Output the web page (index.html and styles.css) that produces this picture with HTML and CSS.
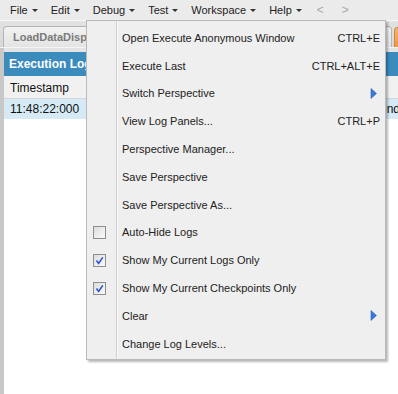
FILE: index.html
```html
<!DOCTYPE html>
<html lang="en">
<head>
  <meta charset="UTF-8">
  <title>Developer Console</title>
  <link rel="stylesheet" href="styles.css">
</head>
<body>
  <div class="menubar">
    <span class="menu-title">File <i class="caret"></i></span>
    <span class="menu-title">Edit <i class="caret"></i></span>
    <span class="menu-title">Debug <i class="caret"></i></span>
    <span class="menu-title">Test <i class="caret"></i></span>
    <span class="menu-title">Workspace <i class="caret"></i></span>
    <span class="menu-title">Help <i class="caret"></i></span>
    <span class="nav">&lt;</span>
    <span class="nav">&gt;</span>
  </div>

  <div class="tabstrip">
    <div class="tab">LoadDataDisplay</div>
    <div class="tab tab-orange"></div>
  </div>

  <div class="workspace">
    <div class="side-strip"></div>
    <div class="panel">
      <div class="panel-header">Execution Log</div>
      <div class="grid-row grid-head">
        <span class="col-time">Timestamp</span>
        <span class="col-rest"></span>
      </div>
      <div class="grid-row grid-selected">
        <span class="col-time">11:48:22:000</span>
        <span class="col-rest">Unde</span>
      </div>
    </div>
  </div>

  <div class="dropdown">
    <div class="item"><span class="gutter"></span><span class="label">Open Execute Anonymous Window</span><span class="key">CTRL+E</span></div>
    <div class="item"><span class="gutter"></span><span class="label">Execute Last</span><span class="key">CTRL+ALT+E</span></div>
    <div class="item"><span class="gutter"></span><span class="label">Switch Perspective</span><span class="key"><svg class="sub-arrow" width="7" height="11" viewBox="0 0 7 11"><path d="M1 0.5 L6.5 5.5 L1 10.5 Z" fill="#3b7bd8" stroke="#2a62b8" stroke-width="0.6"/></svg></span></div>
    <div class="item"><span class="gutter"></span><span class="label">View Log Panels...</span><span class="key">CTRL+P</span></div>
    <div class="item"><span class="gutter"></span><span class="label">Perspective Manager...</span><span class="key"></span></div>
    <div class="item"><span class="gutter"></span><span class="label">Save Perspective</span><span class="key"></span></div>
    <div class="item"><span class="gutter"></span><span class="label">Save Perspective As...</span><span class="key"></span></div>
    <div class="item"><span class="gutter"><span class="check"></span></span><span class="label">Auto-Hide Logs</span><span class="key"></span></div>
    <div class="item"><span class="gutter"><span class="check"><svg width="11" height="11" viewBox="0 0 11 11"><path d="M2.5 5.5 L4.6 8.4 L8.8 2.4" fill="none" stroke="#2a55c8" stroke-width="1.6"/></svg></span></span><span class="label">Show My Current Logs Only</span><span class="key"></span></div>
    <div class="item"><span class="gutter"><span class="check"><svg width="11" height="11" viewBox="0 0 11 11"><path d="M2.5 5.5 L4.6 8.4 L8.8 2.4" fill="none" stroke="#2a55c8" stroke-width="1.6"/></svg></span></span><span class="label">Show My Current Checkpoints Only</span><span class="key"></span></div>
    <div class="item"><span class="gutter"></span><span class="label">Clear</span><span class="key"><svg class="sub-arrow" width="7" height="11" viewBox="0 0 7 11"><path d="M1 0.5 L6.5 5.5 L1 10.5 Z" fill="#3b7bd8" stroke="#2a62b8" stroke-width="0.6"/></svg></span></div>
    <div class="item"><span class="gutter"></span><span class="label">Change Log Levels...</span><span class="key"></span></div>
  </div>
</body>
</html>
```

FILE: styles.css
```css
html, body {
  margin: 0;
  padding: 0;
  height: 100%;
  background-color: #fff;
  font-family: 'Liberation Sans', Arial, sans-serif;
  font-size: 11px;
  color: #222;
  overflow: hidden;
}
.menubar {
  display: flex;
  align-items: center;
  gap: 13px;
  height: 20px;
  padding-left: 10px;
  background-color: #ebebeb;
}
.menu-title {
  display: flex;
  align-items: center;
  gap: 4px;
  color: #222;
}
.caret {
  display: inline-block;
  width: 0;
  height: 0;
  border-left: 3px solid transparent;
  border-right: 3px solid transparent;
  border-top: 3px solid #333;
  margin-top: 1px;
}
.nav {
  color: #a8a8a8;
  font-size: 12px;
  margin-left: 2px;
  margin-right: 3px;
}
.tabstrip {
  display: flex;
  align-items: flex-end;
  gap: 2px;
  height: 26px;
  padding-left: 3px;
  border-top: 1px solid #f8f8f8;
  background: linear-gradient(#e2e2e2, #d8d8d8);
  border-bottom: 1px solid #f4f4f4;
}
.tab {
  flex: none;
  box-sizing: border-box;
  width: 389px;
  height: 21px;
  padding: 4px 9px 0;
  border: 1px solid #b4b4b4;
  border-bottom: none;
  border-radius: 4px 4px 0 0;
  background: linear-gradient(#f2f2f2, #e4e4e4);
  color: #7a7a7a;
  font-weight: bold;
  font-size: 11px;
  white-space: nowrap;
  overflow: hidden;
}
.tab-orange {
  width: 30px;
  height: 20px;
  background: linear-gradient(#f5b56a, #eb9b45);
  border-color: #c98a3e;
}
.workspace {
  display: flex;
  height: calc(100% - 48px);
}
.side-strip {
  flex: none;
  width: 4px;
  background-color: #c8c8c8;
}
.panel {
  flex: 1;
  padding-top: 4px;
  background: linear-gradient(#e4e4e4 4px, #fff 4px);
}
.panel-header {
  height: 24px;
  line-height: 24px;
  padding-left: 5px;
  background-color: #3c8bbd;
  color: #fff;
  font-weight: bold;
  font-size: 12px;
}
.grid-row {
  display: flex;
  align-items: center;
  font-size: 12px;
  color: #111;
}
.grid-head {
  height: 21px;
  padding-top: 1px;
  background-color: #f1f1f1;
  border-bottom: 1px solid #d6d6d6;
}
.grid-selected {
  height: 20px;
  background-color: #d5eaf5;
}
.col-time {
  flex: none;
  width: 368px;
  padding-left: 6px;
}
.col-rest {
  flex: 1;
  white-space: nowrap;
}
.dropdown {
  position: absolute;
  left: 86px;
  top: 20px;
  width: 298px;
  padding: 3px 0 1px;
  border: 1px solid #b9b9b9;
  background: linear-gradient(to right, transparent 29px, #cfcfcf 29px, #cfcfcf 30px, #fafafa 30px, #fafafa 31px, transparent 31px), #efefef;
  box-shadow: 2px 2px 2px rgba(0, 0, 0, 0.28);
}
.item {
  display: flex;
  align-items: center;
  height: 27.8px;
  font-size: 11px;
  color: #222;
}
.gutter {
  flex: none;
  display: flex;
  align-items: center;
  width: 35px;
  padding-left: 6px;
  box-sizing: border-box;
}
.check {
  display: flex;
  align-items: center;
  justify-content: center;
  box-sizing: border-box;
  width: 13px;
  height: 13px;
  border: 1px solid #8e8e8e;
  background: linear-gradient(135deg, #dcdcdc, #fbfbfb);
}
.label {
  flex: 1;
  white-space: nowrap;
}
.key {
  flex: none;
  display: flex;
  align-items: center;
  padding-right: 5px;
}
.sub-arrow {
  margin-right: 3px;
}
```
